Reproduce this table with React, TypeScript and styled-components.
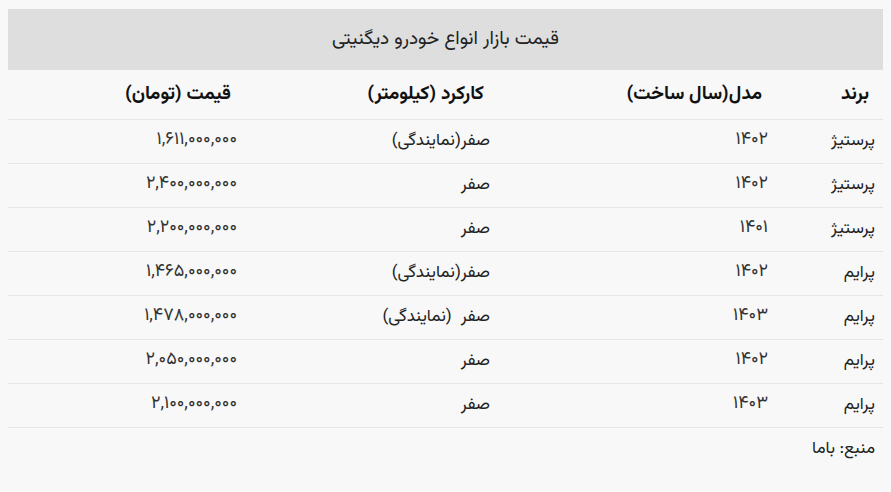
import styled, { createGlobalStyle } from "styled-components";

const GlobalStyle = createGlobalStyle`
  body {
    margin: 8px;
    background: #f8f8f8;
    font-family: "Vazirmatn", "Noto Sans Arabic", "DejaVu Sans", sans-serif;
    color: #222;
  }
`;

const Wrapper = styled.div`
  direction: rtl;
  width: 875px;
`;

const Table = styled.table`
  width: 100%;
  border-collapse: collapse;
  table-layout: fixed;
  font-size: 17px;
`;

const Caption = styled.caption`
  background: #dedede;
  height: 61px;
  line-height: 61px;
  font-size: 19px;
  color: #222;
  margin-top: 1px;
`;

const HeadCell = styled.th<{ $width: number }>`
  box-sizing: border-box;
  width: ${(p) => p.$width}px;
  height: 49px;
  padding: 0 14px 0 8px;
  text-align: right;
  font-size: 19px;
  font-weight: 700;
  color: #111;
  border-bottom: 1px solid #e6e6e6;
  vertical-align: middle;
`;

const Row = styled.tr`
  height: 44px;
  border-bottom: 1px solid #e6e6e6;
`;

const Cell = styled.td<{ $numeric?: boolean }>`
  padding: 0 8px;
  text-align: right;
  vertical-align: middle;
  white-space: pre;
  color: ${(p) => (p.$numeric ? "#333" : "#222")};
  font-size: ${(p) => (p.$numeric ? "18px" : "17px")};
  line-height: 1;
  padding-bottom: ${(p) => (p.$numeric ? "3px" : "0")};
`;

const Source = styled.p`
  margin: 0;
  padding: 8px 8px 0;
  font-size: 17px;
`;

const columns = [
  { title: "برند", width: 107 },
  { title: "مدل(سال ساخت)", width: 278 },
  { title: "کارکرد (کیلومتر)", width: 253 },
  { title: "قیمت (تومان)", width: 237 },
];

const rows = [
  ["پرستیژ", "۱۴۰۲", "صفر(نمایندگی)", "۱,۶۱۱,۰۰۰,۰۰۰"],
  ["پرستیژ", "۱۴۰۲", "صفر", "۲,۴۰۰,۰۰۰,۰۰۰"],
  ["پرستیژ", "۱۴۰۱", "صفر", "۲,۲۰۰,۰۰۰,۰۰۰"],
  ["پرایم", "۱۴۰۲", "صفر(نمایندگی)", "۱,۴۶۵,۰۰۰,۰۰۰"],
  ["پرایم", "۱۴۰۳", "صفر  (نمایندگی)", "۱,۴۷۸,۰۰۰,۰۰۰"],
  ["پرایم", "۱۴۰۲", "صفر", "۲,۰۵۰,۰۰۰,۰۰۰"],
  ["پرایم", "۱۴۰۳", "صفر", "۲,۱۰۰,۰۰۰,۰۰۰"],
];

export default function App() {
  return (
    <Wrapper>
      <GlobalStyle />
      <Table>
        <Caption>قیمت بازار انواع خودرو دیگنیتی</Caption>
        <thead>
          <tr>
            {columns.map((c) => (
              <HeadCell key={c.title} $width={c.width}>
                {c.title}
              </HeadCell>
            ))}
          </tr>
        </thead>
        <tbody>
          {rows.map((r, i) => (
            <Row key={i}>
              {r.map((v, j) => (
                <Cell key={j} $numeric={j === 1 || j === 3}>
                  {v}
                </Cell>
              ))}
            </Row>
          ))}
        </tbody>
      </Table>
      <Source>منبع: باما</Source>
    </Wrapper>
  );
}
